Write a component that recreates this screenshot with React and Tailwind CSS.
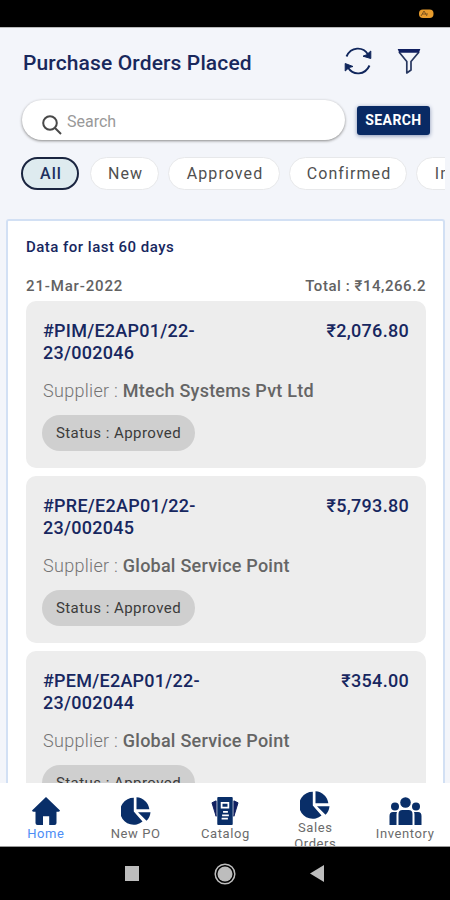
const filters = [
    { label: 'All', width: 'w-[58px] mr-[2px]', active: true },
    { label: 'New', width: 'w-[69px]' },
    { label: 'Approved', width: 'w-[112px]' },
    { label: 'Confirmed', width: 'w-[118px]' },
    { label: 'Invoiced', width: 'w-[104px]' },
];

const orders = [
    { prefix: '#PIM/E2AP01/22-', number: '23/002046', amount: '₹2,076.80', supplier: 'Mtech Systems Pvt Ltd' },
    { prefix: '#PRE/E2AP01/22-', number: '23/002045', amount: '₹5,793.80', supplier: 'Global Service Point' },
    { prefix: '#PEM/E2AP01/22-', number: '23/002044', amount: '₹354.00', supplier: 'Global Service Point' },
];

function RefreshIcon() {
    return (
        <svg className="h-[28px] w-[28px]" viewBox="0 0 28 28" fill="none">
            <path d="M2.500 9.500C7-.5 19-.8 24 7.500M25.500 18.500C21 28.500 9 28.800 4 20.500" stroke="#10265c" strokeWidth="1.900" />
            <path d="M26.800 4V11.500L19 9.200L22.500 7.800ZM1.200 24V16.500L9 19.500L5.200 20.500Z" fill="#10265c" stroke="#10265c" strokeWidth="1" />
        </svg>
    );
}

function FilterIcon() {
    return (
        <svg className="h-[27px] w-[24px]" viewBox="0 0 24 27" fill="none">
            <path d="M2 4L9.800 13.500V25L14 22V13.500L22 4" stroke="#27375f" strokeWidth="1.700" strokeLinejoin="round" />
            <path d="M.7 1H23.300L22 4.800H2.200Z" fill="#101f60" />
        </svg>
    );
}

function HomeIcon() {
    return (
        <svg className="h-[28px] w-[28px] shrink-0" viewBox="0 0 28 28" fill="#092e68">
            <path d="M14 0L28 13.400Q27.500 15 26 14.800H24.500V26Q24.500 28 22.500 28H17.200V19.300H11V28H5.500Q3.500 28 3.500 26V14.800H2Q.5 15 0 13.400Z" />
        </svg>
    );
}

function PieIcon() {
    return (
        <svg className="h-[28px] w-[30px] shrink-0" viewBox="0 0 30 28" fill="#092e68">
            <path d="M12.800.8V14.500L21.500 24.500A13.500 13.500 0 1 1 12.800.8Z" />
            <path d="M15.500.3A13.500 13.500 0 0 1 28.300 12.300H15.500Z" />
            <path d="M17 15.200H29.500Q29 20.500 25.500 23.800Z" />
        </svg>
    );
}

function CatalogIcon() {
    return (
        <svg className="h-[28px] w-[28px] shrink-0" viewBox="0 0 28 29">
            <path d="M.5 6L4.800 4V20ZM27.500 6L23.200 4V20Z" fill="#101f60" stroke="#101f60" strokeWidth="1" strokeLinejoin="round" />
            <rect x="6" y="0" width="16" height="29" rx="1" fill="#092e68" />
            <path d="M10.500 6H17.500V11H10.500ZM12 15.500H17M11 19H18M10.500 22.500H17" fill="none" stroke="white" strokeWidth="1.800" />
        </svg>
    );
}

function PeopleIcon() {
    return (
        <svg className="h-[28px] w-[33px] shrink-0" viewBox="0 0 33 28" fill="#092e68">
            <circle cx="16.500" cy="5.500" r="5.300" />
            <circle cx="6" cy="9.500" r="4" />
            <circle cx="27" cy="9.500" r="4" />
            <path d="M9.500 28V17Q9.500 13 13.500 13H19.500Q23.500 13 23.500 17V28ZM.5 28V19Q.5 15 4 15H8Q7.500 16 7.500 18V28ZM32.500 28V19Q32.500 15 29 15H25Q25.500 16 25.500 18V28Z" />
        </svg>
    );
}

function OrderCard({ order }) {
    return (
        <article className="h-[167px] shrink-0 rounded-[10px] bg-[#ededed] px-[17px] pt-[19px]">
            <div className="flex justify-between text-[18px] leading-[22px] font-medium text-[#172760]">
                <h2 className="tracking-[0.25px]">
                    {order.prefix}<br />{order.number}
                </h2>
                <span className="tracking-[0.3px]">{order.amount}</span>
            </div>
            <p className="mt-[15px] whitespace-nowrap text-[18px] leading-[24px] text-[#747474]">
                <span className="font-light tracking-[0.3px]">Supplier : </span>
                <span className="font-medium tracking-[0.23px] text-[#656565]">{order.supplier}</span>
            </p>
            <span className="mt-[12px] -ml-px flex h-[36px] w-[153px] items-center justify-center rounded-full bg-[#cfcfcf] text-[15px] tracking-[0.45px] text-[#3b3b3b]">
                Status : Approved
            </span>
        </article>
    );
}

function NavItem({ icon, label, active }) {
    return (
        <a className={`flex w-[90px] flex-col items-center pt-[14px] text-[13px] leading-[15px] tracking-[0.6px] ${active ? 'text-[#4d8df5]' : 'text-[#6b6b6b]'}`}>
            {icon}
            <span className="mt-px">{label}</span>
        </a>
    );
}

export default function App() {
    return (
        <div className="flex h-[900px] w-[450px] flex-col overflow-hidden bg-[#f3f5fa] font-['Roboto','Liberation_Sans',sans-serif]">
            {/* Status bar */}
            <div className="flex h-[27px] shrink-0 justify-end bg-black pt-[9px] pr-[16px]">
                <svg className="h-[10px] w-[15px]" viewBox="0 0 15 10">
                    <rect y=".5" width="14.500" height="8.500" rx="4" fill="#e89c2d" />
                    <path d="M2 7L5 2L8 7M3 5H9" fill="none" stroke="#80551e" strokeWidth="1" />
                </svg>
            </div>

            <header className="h-[192px] shrink-0 border-t border-[#b9babb]">
                <div className="flex h-[72px] items-center pl-[23px] pr-[29px]">
                    <h1 className="mb-px text-[21px] font-medium tracking-[0.13px] text-[#19285c]">Purchase Orders Placed</h1>
                    <div className="mb-[6px] ml-auto flex items-center gap-[25px]">
                        <RefreshIcon />
                        <FilterIcon />
                    </div>
                </div>
                <div className="flex items-center pl-[22px]">
                    <div className="flex h-[40px] w-[323px] items-center rounded-full bg-white pl-[20px] shadow-[0_1px_3px_#888]">
                        <svg className="mt-[9px] h-[20px] w-[20px]" viewBox="0 0 20 20" fill="none" stroke="#484848" strokeWidth="2">
                            <circle cx="8" cy="8" r="6.800" />
                            <path d="M13 13L19 19" />
                        </svg>
                        <span className="mt-[3px] ml-[5px] text-[16px] text-[#999]">Search</span>
                    </div>
                    <button className="ml-[12px] h-[29px] w-[73px] rounded-[3px] bg-[#092a64] text-[14px] font-bold tracking-[0.4px] text-white shadow-[0_1px_4px_#8795b5]">SEARCH</button>
                </div>
                <div className="mt-[16px] mr-[5px] ml-[21px] flex gap-[9px] overflow-hidden py-px">
                    {filters.map((filter) => (
                        <button
                            key={filter.label}
                            className={`flex h-[33px] shrink-0 items-center justify-center rounded-full pl-[2px] text-[16px] tracking-[1.1px] ${filter.width} ${filter.active ? 'border-2 border-[#1a2540] bg-[#deebef] font-medium text-[#20305d]' : 'border border-[#e7e8ea] bg-white text-[#505050]'}`}
                        >
                            {filter.label}
                        </button>
                    ))}
                </div>
            </header>

            <main className="mr-[5px] ml-[6px] h-[564px] shrink-0 overflow-hidden rounded-t-[3px] border-x-2 border-t-2 border-[#d2e0f4] bg-white pr-[17px] pl-[18px]">
                <h2 className="mt-[16px] text-[15px] leading-[20px] font-medium tracking-[0.48px] text-[#172760]">Data for last 60 days</h2>
                <div className="mt-[19px] flex h-[20px] justify-between text-[15px] leading-[20px] font-medium text-[#626262]">
                    <span className="tracking-[0.85px]">21-Mar-2022</span>
                    <span className="tracking-[0.55px]">Total : ₹14,266.2</span>
                </div>
                <div className="mt-[5px] flex flex-col gap-[8px]">
                    {orders.map((order) => <OrderCard key={order.number} order={order} />)}
                </div>
            </main>

            {/* App navigation */}
            <nav className="flex h-[64px] shrink-0 overflow-hidden border-b border-[#999] bg-white pl-px">
                <NavItem icon={<HomeIcon />} label="Home" active />
                <NavItem icon={<PieIcon />} label="New PO" />
                <NavItem icon={<CatalogIcon />} label="Catalog" />
                <div className="flex w-[90px] flex-col items-center pt-[8px] text-[13px] leading-[16px] tracking-[0.6px] text-[#6b6b6b]">
                    <PieIcon />
                    <span className="mt-[1px] text-center">Sales<br />Orders</span>
                </div>
                <NavItem icon={<PeopleIcon />} label="Inventory" />
            </nav>

            {/* Android buttons */}
            <div className="flex h-[53px] shrink-0 items-center bg-black pl-[125px]">
                <div className="h-[15px] w-[14px] bg-[#bdbdbd]" />
                <svg className="ml-[75px] h-[22px] w-[22px]" viewBox="0 0 22 22">
                    <circle cx="11" cy="11" r="9.800" fill="none" stroke="#bdbdbd" strokeWidth="1.500" />
                    <circle cx="11" cy="11" r="7.500" fill="#bdbdbd" />
                </svg>
                <svg className="ml-[74px] h-[17px] w-[14px]" viewBox="0 0 14 17"><path d="M14 0V17L0 8.500Z" fill="#bdbdbd" /></svg>
            </div>
        </div>
    );
}
